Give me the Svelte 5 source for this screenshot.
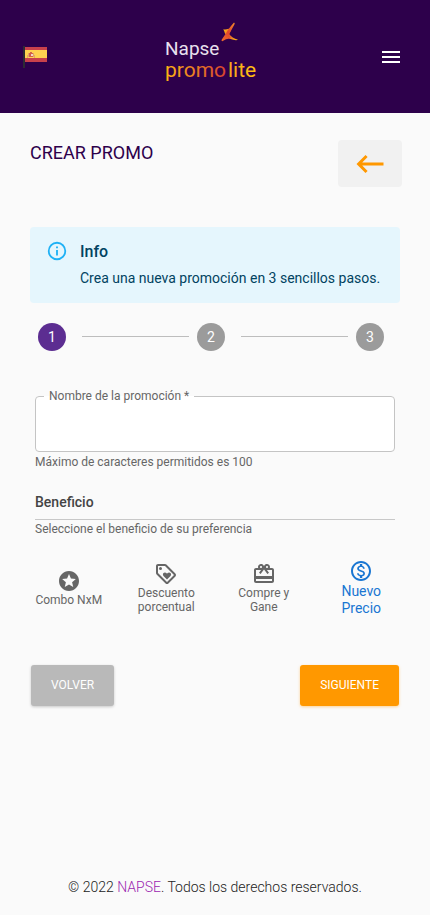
<script lang="ts">
	const benefits = [
		{
			label: 'Combo NxM',
			path: 'M11.99 2C6.47 2 2 6.48 2 12s4.47 10 9.99 10C17.52 22 22 17.52 22 12S17.52 2 11.99 2zm4.24 16L12 15.45 7.77 18l1.12-4.81-3.73-3.23 4.92-.42L12 5l1.92 4.53 4.92.42-3.73 3.23L16.23 18z'
		},
		{
			label: 'Descuento porcentual',
			path: 'M21.41 11.58l-9-9C12.05 2.22 11.55 2 11 2H4c-1.1 0-2 .9-2 2v7c0 .55.22 1.05.59 1.42l9 9c.36.36.86.58 1.41.58s1.05-.22 1.41-.59l7-7c.37-.36.59-.86.59-1.41s-.23-1.06-.59-1.42zM13 20.01L4 11V4h7v-.01l9 9-7 7.02zM6.5 5a1.5 1.5 0 1 0 0 3 1.5 1.5 0 0 0 0-3zM8.9 12.55c0 .57.23 1.07.6 1.45l3.5 3.5 3.5-3.5c.37-.37.6-.89.6-1.45 0-1.13-.92-2.05-2.05-2.05-.57 0-1.08.23-1.45.6l-.6.6-.6-.59c-.37-.38-.89-.61-1.45-.61-1.13 0-2.05.92-2.05 2.05z'
		},
		{
			label: 'Compre y Gane',
			path: 'M20 6h-2.18c.11-.31.18-.65.18-1 0-1.66-1.34-3-3-3-1.05 0-1.96.54-2.5 1.35l-.5.67-.5-.68C10.96 2.54 10.05 2 9 2 7.34 2 6 3.34 6 5c0 .35.07.69.18 1H4c-1.11 0-1.99.89-1.99 2L2 19c0 1.11.89 2 2 2h16c1.11 0 2-.89 2-2V8c0-1.11-.89-2-2-2zm-5-2c.55 0 1 .45 1 1s-.45 1-1 1-1-.45-1-1 .45-1 1-1zM9 4c.55 0 1 .45 1 1s-.45 1-1 1-1-.45-1-1 .45-1 1-1zm11 15H4v-2h16v2zm0-5H4V8h5.08L7 10.83 8.62 12 11 8.76l1-1.36 1 1.36L15.38 12 17 10.83 14.92 8H20v6z'
		},
		{
			label: 'Nuevo Precio',
			path: 'M12 2C6.48 2 2 6.48 2 12s4.48 10 10 10 10-4.48 10-10S17.52 2 12 2zm0 18c-4.41 0-8-3.59-8-8s3.59-8 8-8 8 3.59 8 8-3.59 8-8 8zm.31-8.86c-1.77-.45-2.34-.94-2.34-1.67 0-.84.79-1.43 2.1-1.43 1.38 0 1.9.66 1.94 1.64h1.71c-.05-1.34-.87-2.57-2.49-2.97V5H10.9v1.69c-1.51.32-2.72 1.3-2.72 2.81 0 1.79 1.49 2.69 3.66 3.21 1.95.46 2.34 1.15 2.34 1.87 0 .53-.39 1.39-2.1 1.39-1.6 0-2.23-.72-2.32-1.64H8.04c.1 1.7 1.36 2.66 2.86 2.97V19h2.34v-1.67c1.52-.29 2.72-1.16 2.73-2.77-.01-2.2-1.9-2.96-3.66-3.42z'
		}
	];

	const steps = [1, 2, 3];

	let currentStep = $state(1);
	let selected = $state('Nuevo Precio');
	let promoName = $state('');
</script>

<div class="page">
	<header class="topbar">
		<button class="icon-button" type="button" aria-label="Idioma">
			<svg width="24" height="22" viewBox="0 0 24 22">
				<rect x="2" y="1" width="22" height="15" fill="#c8414b" />
				<rect x="2" y="4" width="22" height="8" fill="#ffd250" />
				<rect x="0" y="0" width="2" height="22" fill="#2d2b33" />
				<path d="M4 9h1v3H4zM11 9h1v3h-1zM5 7h1v4H5zM10 7h1v4h-1z" fill="#e3a862" />
				<path d="M6 7h1V6h2v1h1v4H6z" fill="#d2604d" />
				<path d="M8 8h2v2H8z" fill="#f3d3cb" />
			</svg>
		</button>

		<svg class="logo" width="96" height="72" viewBox="0 0 96 72" role="img" aria-label="Napse promo lite">
			<defs>
				<linearGradient id="promo" x1="0" x2="1" y1="0" y2="0">
					<stop offset="0" stop-color="#fbb615" />
					<stop offset="1" stop-color="#d9432f" />
				</linearGradient>
				<linearGradient id="lite" x1="0" x2="1" y1="0" y2="0">
					<stop offset="0" stop-color="#f9a51d" />
					<stop offset="1" stop-color="#fdc010" />
				</linearGradient>
				<linearGradient id="star-arm" x1="58" x2="73" y1="10" y2="19" gradientUnits="userSpaceOnUse">
					<stop offset="0" stop-color="#fdb515" />
					<stop offset="0.45" stop-color="#e8652a" />
					<stop offset="1" stop-color="#fdc010" />
				</linearGradient>
				<linearGradient id="star-blade" x1="69" x2="57" y1="2" y2="20" gradientUnits="userSpaceOnUse">
					<stop offset="0" stop-color="#f2892a" />
					<stop offset="0.5" stop-color="#e0452c" />
					<stop offset="1" stop-color="#ee6a2c" />
				</linearGradient>
			</defs>
			<path
				d="M58.300 8.300Q61 8.800 63.500 7.800L66 9L64 13Q67 17 73 18.800Q71 20 64.500 17.800L60 12.500Q59.500 10.500 58.300 8.300Z"
				fill="url(#star-arm)"
			/>
			<path
				d="M69 1.500Q70.200 2 69.500 3.200L64.300 13Q64.500 15.500 66 17.500Q61.500 17 57.300 20.300Q56 20 56.800 18.500L61.500 11.500Q62.800 8.500 69 1.500Z"
				fill="url(#star-blade)"
			/>
			<text x="0" y="34" font-size="19" fill="#e9e0ee">Napse</text>
			<text x="0" y="56" font-size="21" fill="url(#promo)">promo</text>
			<text x="63" y="56" font-size="21" fill="url(#lite)">lite</text>
		</svg>

		<button class="icon-button" type="button" aria-label="Menú">
			<svg width="24" height="24" viewBox="0 0 24 24" fill="#fff">
				<path d="M3 18h18v-2H3v2zm0-5h18v-2H3v2zm0-7v2h18V6H3z" />
			</svg>
		</button>
	</header>

	<main>
		<div class="title-row">
			<h1>CREAR PROMO</h1>
			<button class="back-button" type="button" aria-label="Regresar">
				<svg width="36" height="36" viewBox="0 0 24 24" fill="#ff9800">
					<path d="M21 11H6.83l3.58-3.59L9 6l-6 6 6 6 1.41-1.41L6.83 13H21z" />
				</svg>
			</button>
		</div>

		<div class="alert" role="alert">
			<svg width="22" height="22" viewBox="0 0 24 24" fill="#1fb1f5">
				<path
					d="M11,9H13V7H11M12,20C7.59,20 4,16.41 4,12C4,7.59 7.59,4 12,4C16.41,4 20,7.59 20,12C20,16.41 16.41,20 12,20M12,2A10,10 0 0,0 2,12A10,10 0 0,0 12,22A10,10 0 0,0 22,12A10,10 0 0,0 12,2M11,17H13V11H11V17Z"
				/>
			</svg>
			<div>
				<h2>Info</h2>
				<p>Crea una nueva promoción en 3 sencillos pasos.</p>
			</div>
		</div>

		<ol class="stepper">
			{#each steps as step (step)}
				<li class:active={step === currentStep}>
					<span>{step}</span>
				</li>
			{/each}
		</ol>

		<form onsubmit={(e) => e.preventDefault()}>
			<fieldset>
				<legend><label for="promo-name">Nombre de la promoción *</label></legend>
				<input id="promo-name" type="text" maxlength="100" required bind:value={promoName} />
			</fieldset>
			<p class="helper">Máximo de caracteres permitidos es 100</p>

			<h3>Beneficio</h3>
			<p class="helper">Seleccione el beneficio de su preferencia</p>

			<div class="benefits">
				{#each benefits as benefit (benefit.label)}
					<button
						type="button"
						class="benefit"
						class:selected={benefit.label === selected}
						aria-pressed={benefit.label === selected}
						onclick={() => (selected = benefit.label)}
					>
						<svg width="24" height="24" viewBox="0 0 24 24" fill="currentColor">
							<path d={benefit.path} />
						</svg>
						<span>{benefit.label}</span>
					</button>
				{/each}
			</div>

			<div class="actions">
				<button
					type="button"
					class="action"
					onclick={() => (currentStep = Math.max(1, currentStep - 1))}
				>VOLVER</button>
				<button
					type="button"
					class="action next"
					onclick={() => (currentStep = Math.min(steps.length, currentStep + 1))}
				>SIGUIENTE</button>
			</div>
		</form>
	</main>

	<footer>© 2022 <a href="#napse">NAPSE</a>. Todos los derechos reservados.</footer>
</div>

<style>
	:global(body) {
		margin: 0;
		background: #fafafa;
	}

	.page {
		display: flex;
		flex-direction: column;
		min-height: 100vh;
		font-family: Roboto, sans-serif;
		font-size: 14px;
		color: #666;
	}

	button {
		font-family: inherit;
		border: 0;
		cursor: pointer;
	}

	svg {
		display: block;
		flex: none;
	}

	h1,
	h2,
	h3,
	p {
		margin: 0;
	}

	.topbar {
		display: flex;
		align-items: center;
		justify-content: space-between;
		padding: 21px 27px 20px 23px;
		background: #2d004b;
	}

	.icon-button {
		padding: 0;
		background: none;
	}

	main {
		flex: 1;
		padding: 27px 30px 0;
	}

	.title-row {
		display: flex;
		align-items: flex-start;
		justify-content: space-between;
		margin-right: -2px;
	}

	h1 {
		font-size: 18px;
		line-height: 26px;
		font-weight: 400;
		color: #2d004b;
	}

	.back-button {
		display: flex;
		align-items: center;
		justify-content: center;
		width: 64px;
		height: 47px;
		padding: 0;
		border-radius: 4px;
		background: #f1f1f1;
	}

	.alert {
		display: flex;
		gap: 12px;
		margin-top: 40px;
		padding: 13px 16px 15px;
		border-radius: 4px;
		background: #e5f6fd;
		color: #014361;
	}

	.alert h2 {
		font-size: 16px;
		line-height: 24px;
		font-weight: 500;
	}

	.alert p {
		margin-top: 4px;
		line-height: 20px;
	}

	.stepper {
		display: flex;
		margin: 20px 16px 0 8px;
		padding: 0;
		list-style: none;
	}

	.stepper li {
		display: flex;
		align-items: center;
	}

	.stepper li:not(:last-child) {
		flex: 1;
	}

	.stepper li:not(:last-child)::after {
		content: '';
		flex: 1;
		height: 1px;
		margin: 0 8px 1px 16px;
		background: #bdbdbd;
	}

	.stepper span {
		width: 28px;
		border-radius: 50%;
		background: #9b9b9b;
		color: #fff;
		line-height: 28px;
		text-align: center;
	}

	.stepper .active span {
		background: #5c2d91;
	}

	form {
		padding: 39px 5px 0;
	}

	fieldset {
		min-width: 0;
		margin: 0 0 1px;
		padding: 0;
		border: 1px solid #c4c4c4;
		border-radius: 4px;
		background: #fff;
	}

	legend {
		margin-left: 8px;
		padding: 0 5px;
		font-size: 12px;
		line-height: 12px;
	}

	legend label {
		display: block;
	}

	input {
		display: block;
		box-sizing: border-box;
		width: 100%;
		height: 49px;
		padding: 0 14px 6px;
		border: 0;
		outline: 0;
		background: none;
		font: inherit;
		font-size: 16px;
		color: #333;
	}

	.helper {
		font-size: 12px;
		line-height: 18px;
	}

	h3 {
		margin-top: 21px;
		padding-bottom: 7px;
		border-bottom: 1px solid #c8c8c8;
		font-size: 14px;
		line-height: 20px;
		font-weight: 500;
		color: #444;
	}

	.benefits {
		display: grid;
		grid-template-columns: repeat(4, 1fr);
		margin: 21px -15px 0;
	}

	.benefit {
		display: flex;
		flex-direction: column;
		align-items: center;
		justify-content: center;
		padding: 0 12px;
		background: none;
		color: #666;
		font-size: 12px;
		line-height: 14px;
	}

	.benefit.selected {
		color: #1976d2;
		font-size: 14px;
		line-height: 17px;
	}

	.actions {
		display: flex;
		justify-content: space-between;
		margin: 48px -4px 0;
	}

	.action {
		padding: 0 20px;
		border-radius: 3px;
		background: #b9b9b9;
		box-shadow: 0 1px 3px rgba(0, 0, 0, 0.2);
		color: #fff;
		font-size: 12px;
		line-height: 41px;
	}

	.action.next {
		background: #ff9800;
		box-shadow: 0 1px 3px rgba(255, 152, 0, 0.4);
	}

	footer {
		padding: 40px 15px 18px;
		color: #222;
		font-weight: 300;
		line-height: 20px;
		text-align: center;
	}

	footer a {
		color: #9c27b0;
		text-decoration: none;
	}
</style>
